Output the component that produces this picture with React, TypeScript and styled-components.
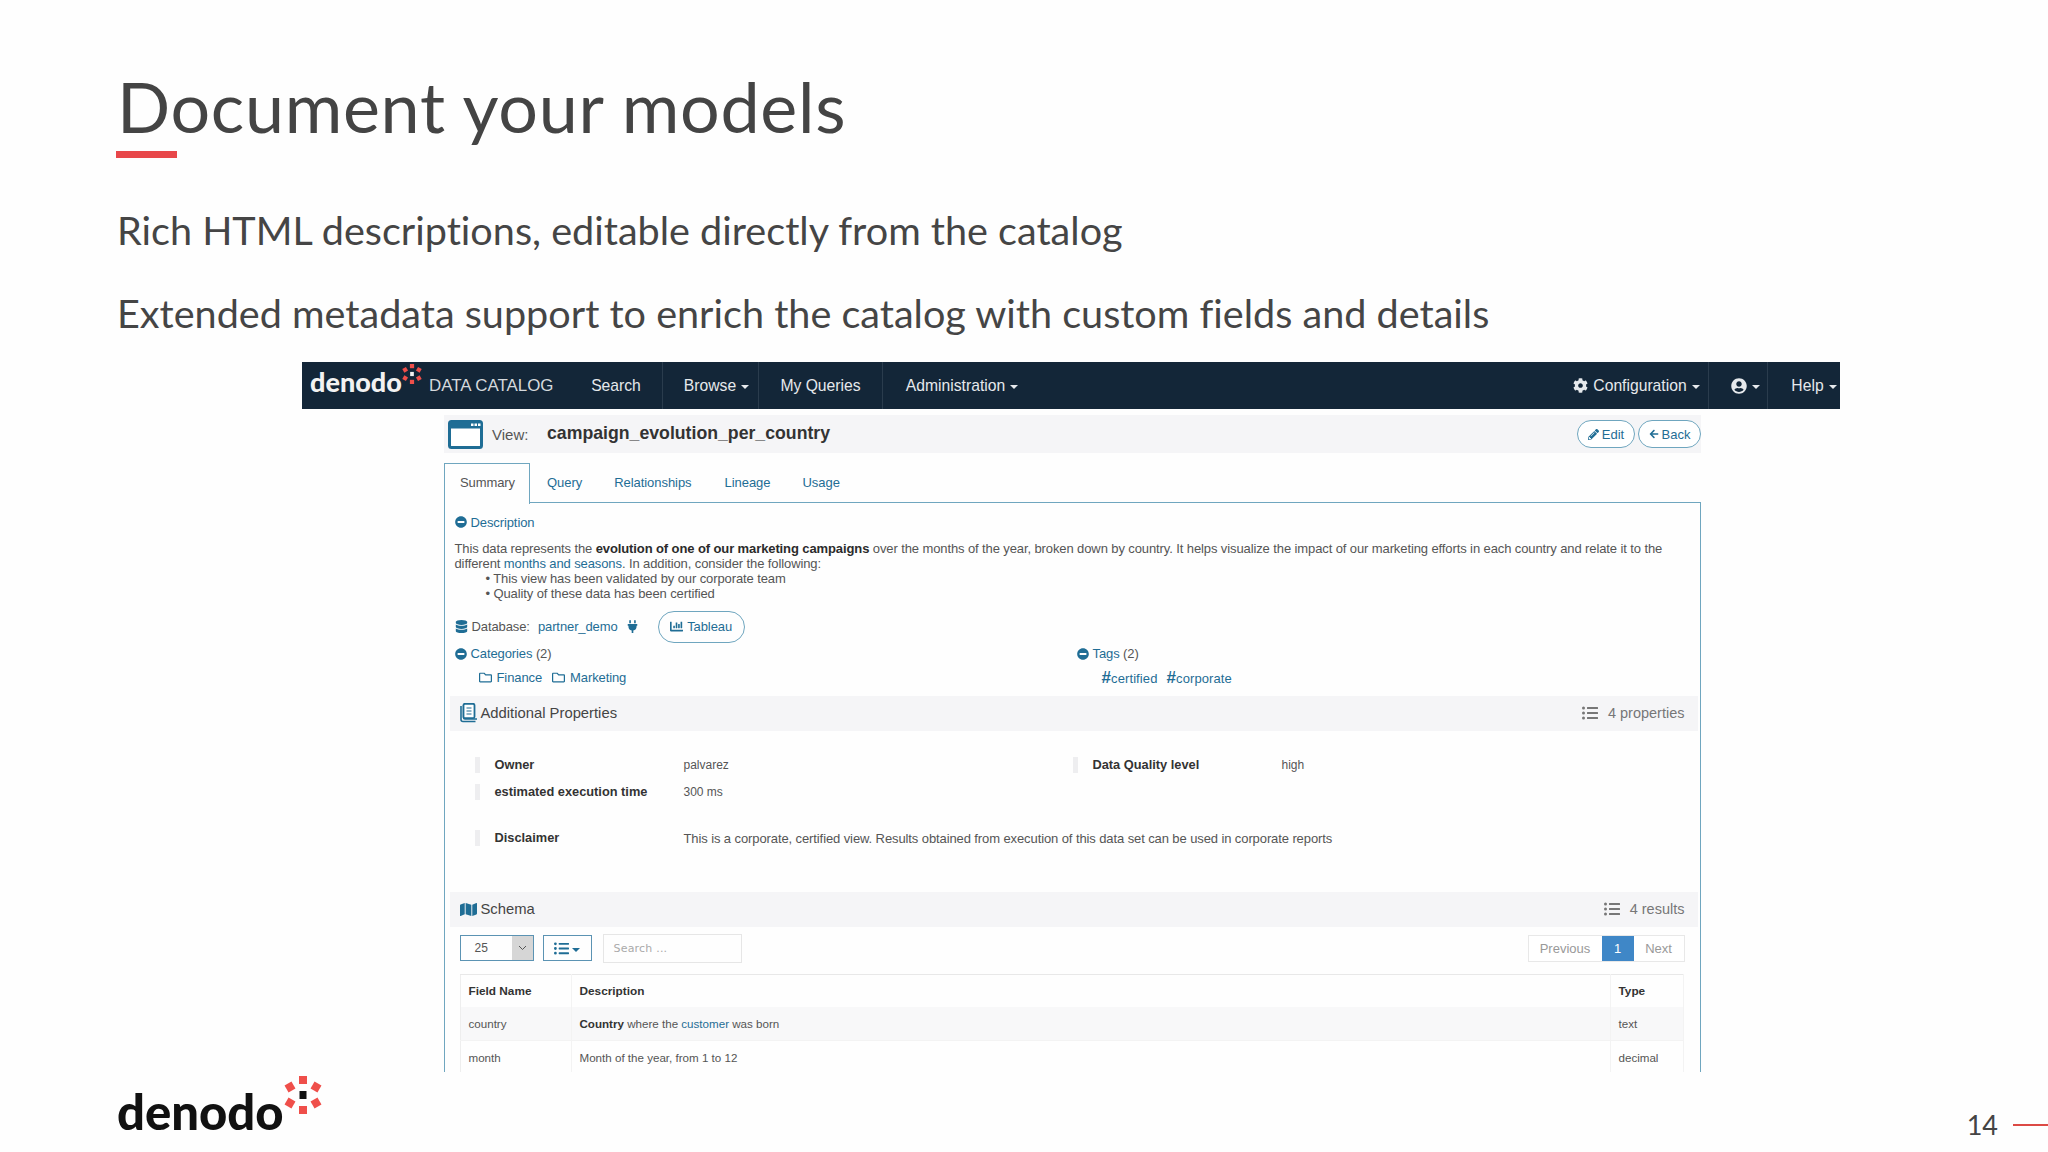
import styled, { createGlobalStyle } from "styled-components";
import {
  FaArrowLeft,
  FaChartBar,
  FaCog,
  FaDatabase,
  FaListUl,
  FaMap,
  FaMinusCircle,
  FaPencilAlt,
  FaPlug,
  FaRegFolder,
  FaUserCircle
} from "react-icons/fa";

const LINK = "#1f6d95";
const BORDER = "#6fa6bf";

const GlobalStyle = createGlobalStyle`
  * { box-sizing: border-box; }
  html, body { margin: 0; padding: 0; background: #fefefe; }
`;

const Slide = styled.div`
  width: 2048px;
  height: 1152px;
  overflow: hidden;
  display: flex;
  flex-direction: column;
  background: #fefefe;
  font-family: "Lato", "Liberation Sans", sans-serif;
  font-variant-ligatures: none;
  color: #444;
`;

const Title = styled.h1`
  margin: 63px 0 0 117px;
  font-size: 70px;
  line-height: 86px;
  font-weight: 400;
  letter-spacing: 0.7px;
  color: #444;
`;

const TitleRule = styled.div`
  width: 61px;
  height: 7px;
  margin: 2px 0 0 116px;
  background: #e8474a;
`;

const Lead = styled.p<{ $top: number }>`
  margin: ${(p) => p.$top}px 0 0 117px;
  font-size: 39.6px;
  line-height: 50px;
  color: #454545;
`;

const AppFrame = styled.div`
  width: 1538px;
  height: 710px;
  margin: 24px 0 0 302px;
  overflow: hidden;
  font-family: "Liberation Sans", Arial, sans-serif;
  font-size: 13px;
  color: #555;
`;

const NavBar = styled.nav`
  height: 47px;
  display: flex;
  align-items: stretch;
  background: #132638;
  color: #e6e9ec;
  font-size: 15.7px;
`;

const NavBrand = styled.div`
  width: 127px;
  display: flex;
  align-items: center;
  padding-left: 8px;
`;

const BrandWord = styled.span`
  margin-top: -7px;
  font-family: "Lato", sans-serif;
  font-size: 27px;
  font-weight: 900;
  color: #f2f2f2;
  line-height: 30px;
`;

const BrandMark = styled.span`
  display: inline-flex;
  margin-top: -24px;
`;

const NavTitle = styled.div`
  width: 141px;
  display: flex;
  align-items: center;
  font-size: 16.9px;
  color: #d5d9dd;
`;

const NavItem = styled.div<{ $width: number; $edge?: boolean; $pad?: number }>`
  width: ${(p) => p.$width}px;
  padding-left: ${(p) => p.$pad ?? 0}px;
  display: flex;
  align-items: center;
  justify-content: center;
  gap: 5px;
  border-right: ${(p) => (p.$edge ? "1px solid #2a3c4d" : "none")};
`;

const NavSpacer = styled.div`
  flex: 1;
`;

const Caret = styled.span`
  display: inline-block;
  width: 0;
  height: 0;
  margin-top: 3px;
  border-left: 4px solid transparent;
  border-right: 4px solid transparent;
  border-top: 4px solid currentColor;
`;

const Content = styled.div`
  margin-left: 142px;
  width: 1257px;
`;

const ViewBar = styled.div`
  height: 38px;
  margin-top: 6px;
  padding: 0 0 0 4px;
  display: flex;
  align-items: center;
  background: #f5f5f7;
`;

const ViewLabel = styled.span`
  margin-left: 9px;
  width: 55px;
  font-size: 15px;
  color: #555;
`;

const ViewName = styled.span`
  flex: 1;
  margin-top: -2px;
  font-size: 17.7px;
  font-weight: 700;
  color: #333;
`;

const PillButton = styled.span<{ $width: number }>`
  width: ${(p) => p.$width}px;
  height: 28px;
  margin-left: 3px;
  display: inline-flex;
  align-items: center;
  justify-content: center;
  gap: 3px;
  border: 1px solid ${BORDER};
  border-radius: 14px;
  background: #fff;
  color: ${LINK};
  font-size: 13px;
`;

const TabRow = styled.div`
  height: 39px;
  margin-top: 10px;
  display: flex;
  align-items: stretch;
`;

const ActiveTab = styled.div`
  width: 86px;
  height: 41px;
  padding: 0 0 4px 15px;
  display: flex;
  align-items: center;
  border: 1.5px solid ${BORDER};
  border-bottom: none;
  background: #fefefe;
  position: relative;
  z-index: 1;
  color: #555;
  letter-spacing: -0.1px;
`;

const Tab = styled.div<{ $gap: number }>`
  margin-left: ${(p) => p.$gap}px;
  display: flex;
  align-items: center;
  color: ${LINK};
  letter-spacing: -0.05px;
`;

const Panel = styled.div`
  height: 570px;
  padding: 0 2.5px 0 4.5px;
  border: 1.5px solid ${BORDER};
  border-bottom: none;
`;

const Line = styled.div<{ $top: number; $height?: number }>`
  height: ${(p) => p.$height ?? 20}px;
  margin: ${(p) => p.$top}px 0 0 5px;
  display: flex;
  align-items: center;
  letter-spacing: -0.1px;
`;

const Toggle = styled(FaMinusCircle)`
  width: 12px;
  height: 12px;
  margin-right: 4px;
  color: ${LINK};
`;

const LinkText = styled.span`
  color: ${LINK};
`;

const Paragraph = styled.div`
  margin: 8.5px 0 0 5px;
  line-height: 15px;
  color: #555;
  letter-spacing: -0.105px;

  b {
    color: #2b2b2b;
  }
`;

const Bullet = styled.div`
  padding-left: 31px;
`;

const RowIcon = styled.span<{ $gap: number }>`
  display: inline-flex;
  margin-right: ${(p) => p.$gap}px;
  color: ${LINK};
`;

const DatabaseName = styled.span`
  margin: 0 8px;
  color: ${LINK};
`;

const TableauButton = styled.span`
  width: 87px;
  height: 32px;
  margin-left: 19px;
  display: inline-flex;
  align-items: center;
  justify-content: center;
  gap: 4px;
  border: 1.5px solid ${BORDER};
  border-radius: 16px;
  color: ${LINK};
`;

const TwoCols = styled.div`
  display: grid;
  grid-template-columns: 622px 1fr;
`;

const FolderLink = styled.span`
  display: inline-flex;
  align-items: center;
  gap: 5px;
  margin-right: 10px;
  color: ${LINK};
  letter-spacing: -0.1px;
`;

const ChipRow = styled.div<{ $indent: number }>`
  height: 20px;
  margin-top: 4px;
  padding-left: ${(p) => p.$indent}px;
  display: flex;
  align-items: center;
`;

const Hash = styled.span`
  font-weight: 700;
  font-size: 17px;
`;

const TagLink = styled.span`
  margin-right: 9px;
  color: ${LINK};
  letter-spacing: 0.1px;
`;

const SectionHeader = styled.div<{ $top: number }>`
  height: 35px;
  margin-top: ${(p) => p.$top}px;
  padding: 0 13px 0 10px;
  display: flex;
  align-items: center;
  justify-content: space-between;
  background: #f5f5f7;
`;

const SectionName = styled.div`
  display: flex;
  align-items: center;
  gap: 3px;
  font-size: 14.8px;
  color: #444;
`;

const SchemaIcon = styled(FaMap)`
  width: 17px;
  height: 17px;
  margin-right: 1px;
  color: ${LINK};
`;

const SectionCount = styled.div`
  display: flex;
  align-items: center;
  gap: 10px;
  font-size: 14.5px;
  color: #777;
`;

const PropRow = styled.div<{ $top: number }>`
  margin-top: ${(p) => p.$top}px;
  padding-left: 25px;
  display: grid;
  grid-template-columns: 598px 1fr;
`;

const Prop = styled.div<{ $wide?: boolean }>`
  height: 20px;
  display: flex;
  align-items: center;
  grid-column: ${(p) => (p.$wide ? "1 / -1" : "auto")};
`;

const PropBar = styled.span`
  width: 5px;
  height: 16px;
  background: #eeeef0;
`;

const PropLabel = styled.span`
  width: 204px;
  padding-left: 15px;
  font-weight: 700;
  font-size: 12.8px;
  color: #333;
`;

const PropValue = styled.span<{ $large?: boolean }>`
  margin-top: 1px;
  font-size: ${(p) => (p.$large ? 13 : 12)}px;
  color: #555;
  letter-spacing: ${(p) => (p.$large ? "-0.1px" : "0")};
`;

const Toolbar = styled.div`
  height: 29px;
  margin: 7px 13px 0 10px;
  display: flex;
  align-items: center;
`;

const PageSize = styled.div`
  width: 74px;
  height: 26px;
  display: flex;
  align-items: stretch;
  border: 1px solid #5b93b3;
`;

const PageSizeValue = styled.span`
  flex: 1;
  padding-left: 14px;
  display: flex;
  align-items: center;
  font-size: 12px;
  color: #555;
`;

const PageSizeArrow = styled.span`
  width: 21px;
  display: flex;
  align-items: center;
  justify-content: center;
  background: #d6d6d6;
  color: #555;
`;

const ColumnsButton = styled.div`
  width: 49px;
  height: 26px;
  margin-left: 9px;
  display: flex;
  align-items: center;
  justify-content: center;
  gap: 3px;
  border: 1px solid #5b93b3;
  color: ${LINK};
`;

const SearchBox = styled.div`
  width: 139px;
  height: 29px;
  margin-left: 11px;
  padding-left: 10px;
  display: flex;
  align-items: center;
  border: 1.5px solid #e6e6e6;
  font-family: "DejaVu Sans", sans-serif;
  font-size: 11px;
  letter-spacing: 0.2px;
  color: #aaa;
`;

const Pager = styled.div`
  margin-left: auto;
  height: 27px;
  display: flex;
  align-items: stretch;
  border: 1px solid #e8e8e8;
`;

const PageCell = styled.span<{ $width: number; $active?: boolean }>`
  width: ${(p) => p.$width}px;
  display: flex;
  align-items: center;
  justify-content: center;
  font-size: 13px;
  background: ${(p) => (p.$active ? "#3f87c7" : "#fff")};
  color: ${(p) => (p.$active ? "#fff" : "#999")};
`;

const SchemaTable = styled.table`
  width: 1224px;
  margin: 11px 0 0 10px;
  border-collapse: collapse;
  table-layout: fixed;
  border-top: 1.5px solid #e8e8e8;
  border-left: 1px solid #eee;
  border-right: 1px solid #eee;
  font-size: 11.6px;
  color: #555;

  th {
    height: 33px;
    padding: 0 8px;
    text-align: left;
    font-size: 11.8px;
    color: #333;
    border-right: 1px solid #f3f3f3;
  }
  td {
    height: 33.5px;
    padding: 0 8px;
    border-right: 1px solid #f3f3f3;
    border-bottom: 1px solid #f3f3f3;
  }
  tbody tr:nth-child(odd) td {
    background: #f8f8f9;
  }
  b {
    color: #333;
  }
`;

const FieldCol = styled.col`
  width: 111px;
`;

const TypeCol = styled.col`
  width: 73px;
`;

const Footer = styled.div`
  flex: 1;
  display: flex;
  align-items: flex-start;
  justify-content: space-between;
`;

const FooterLogo = styled.div`
  margin: 4px 0 0 117px;
  display: flex;
  align-items: flex-start;
`;

const FooterWord = styled.span`
  font-family: "Lato", sans-serif;
  font-size: 49px;
  font-weight: 900;
  line-height: 52px;
  margin-top: 9px;
  color: #111;
`;

const PageMark = styled.div`
  margin-top: 36px;
  display: flex;
  align-items: center;
  gap: 15px;
  font-size: 27px;
  color: #444;
`;

const PageRule = styled.span`
  width: 35px;
  height: 2px;
  background: #dc4a45;
`;

function BrandDots({ size, centre }: { size: number; centre: string }) {
  return (
    <svg width={size} height={size} viewBox="0 0 38 38" aria-hidden="true">
      <rect x="15" y="0" width="8" height="8" fill="#ef4f4a" />
      <rect x="15" y="30" width="8" height="8" fill="#ef4f4a" />
      <rect x="15.5" y="15" width="7" height="8" fill={centre} />
      <rect x="2" y="7" width="8" height="8" fill="#ef4f4a" transform="rotate(-30 6 11)" />
      <rect x="28" y="7" width="8" height="8" fill="#ef4f4a" transform="rotate(30 32 11)" />
      <rect x="2" y="23" width="8" height="8" fill="#ef4f4a" transform="rotate(30 6 27)" />
      <rect x="28" y="23" width="8" height="8" fill="#ef4f4a" transform="rotate(-30 32 27)" />
    </svg>
  );
}

function ViewIcon() {
  return (
    <svg width="35" height="29" viewBox="0 0 35 29" aria-hidden="true">
      <rect x="1.5" y="1.5" width="32" height="26" rx="2" fill="#fff" stroke="#1f6d95" strokeWidth="3" />
      <rect x="1.5" y="1.5" width="32" height="7" fill="#1f6d95" />
      <rect x="23" y="3.5" width="2.5" height="2.5" fill="#fff" />
      <rect x="26.5" y="3.5" width="2.5" height="2.5" fill="#fff" />
      <rect x="30" y="3.5" width="2.5" height="2.5" fill="#fff" />
    </svg>
  );
}

function PropertiesIcon() {
  return (
    <svg width="18" height="20" viewBox="0 0 18 20" aria-hidden="true">
      <path d="M1 3v13.5a2 2 0 0 0 2 2h12.5" fill="none" stroke="#1f6d95" strokeWidth="1.6" />
      <path d="M3.5 2v12.5a1.5 1.5 0 0 0 1.5 1.5h12" fill="none" stroke="#1f6d95" strokeWidth="1.4" />
      <rect x="3.5" y="0.8" width="11" height="14.4" rx="1.5" fill="#fff" stroke="#1f6d95" strokeWidth="1.8" />
      <path d="M6.5 5h5M6.5 8h5M6.5 11h5" stroke="#6b9db8" strokeWidth="1.3" />
    </svg>
  );
}

function ChevronDown() {
  return (
    <svg width="9" height="6" viewBox="0 0 9 6" aria-hidden="true">
      <path d="M1 1l3.5 3.5L8 1" fill="none" stroke="#555" strokeWidth="1" />
    </svg>
  );
}

export default function App() {
  return (
    <Slide>
      <GlobalStyle />
      <Title>Document your models</Title>
      <TitleRule />
      <Lead $top={47}>Rich HTML descriptions, editable directly from the catalog</Lead>
      <Lead $top={33}>Extended metadata support to enrich the catalog with custom fields and details</Lead>

      <AppFrame>
        <NavBar>
          <NavBrand>
            <BrandWord>denodo</BrandWord>
            <BrandMark>
              <BrandDots size={20} centre="#f2f2f2" />
            </BrandMark>
          </NavBrand>
          <NavTitle>DATA CATALOG</NavTitle>
          <NavItem $width={93} $edge>Search</NavItem>
          <NavItem $width={96} $edge $pad={12}>
            Browse <Caret />
          </NavItem>
          <NavItem $width={124} $edge>My Queries</NavItem>
          <NavItem $width={158}>
            Administration <Caret />
          </NavItem>
          <NavSpacer />
          <NavItem $width={146} $edge $pad={2}>
            <FaCog size={15} /> Configuration <Caret />
          </NavItem>
          <NavItem $width={59} $edge $pad={14}>
            <FaUserCircle size={16} /> <Caret />
          </NavItem>
          <NavItem $width={72} $pad={20}>
            Help <Caret />
          </NavItem>
        </NavBar>

        <Content>
          <ViewBar>
            <ViewIcon />
            <ViewLabel>View:</ViewLabel>
            <ViewName>campaign_evolution_per_country</ViewName>
            <PillButton $width={58}>
              <FaPencilAlt size={11} /> Edit
            </PillButton>
            <PillButton $width={63}>
              <FaArrowLeft size={10} /> Back
            </PillButton>
          </ViewBar>

          <TabRow>
            <ActiveTab>Summary</ActiveTab>
            <Tab $gap={17}>Query</Tab>
            <Tab $gap={32}>Relationships</Tab>
            <Tab $gap={33}>Lineage</Tab>
            <Tab $gap={32}>Usage</Tab>
          </TabRow>

          <Panel>
            <Line $top={9}>
              <Toggle />
              <LinkText>Description</LinkText>
            </Line>
            <Paragraph>
              This data represents the <b>evolution of one of our marketing campaigns</b> over the months of the year, broken down by country. It helps visualize the impact of our marketing efforts in each country and relate it to the
              <br />
              different <LinkText>months and seasons</LinkText>. In addition, consider the following:
              <Bullet>• This view has been validated by our corporate team</Bullet>
              <Bullet>• Quality of these data has been certified</Bullet>
            </Paragraph>

            <Line $top={10} $height={32}>
              <RowIcon $gap={4}>
                <FaDatabase size={13} />
              </RowIcon>
              Database:
              <DatabaseName>partner_demo</DatabaseName>
              <RowIcon $gap={0}>
                <FaPlug size={13} />
              </RowIcon>
              <TableauButton>
                <FaChartBar size={13} /> Tableau
              </TableauButton>
            </Line>

            <TwoCols>
              <div>
                <Line $top={1}>
                  <Toggle />
                  <LinkText>Categories</LinkText>&nbsp;(2)
                </Line>
                <ChipRow $indent={29}>
                  <FolderLink>
                    <FaRegFolder size={13} /> Finance
                  </FolderLink>
                  <FolderLink>
                    <FaRegFolder size={13} /> Marketing
                  </FolderLink>
                </ChipRow>
              </div>
              <div>
                <Line $top={1}>
                  <Toggle />
                  <LinkText>Tags</LinkText>&nbsp;(2)
                </Line>
                <ChipRow $indent={30}>
                  <TagLink>
                    <Hash>#</Hash>certified
                  </TagLink>
                  <TagLink>
                    <Hash>#</Hash>corporate
                  </TagLink>
                </ChipRow>
              </div>
            </TwoCols>

            <SectionHeader $top={8}>
              <SectionName>
                <PropertiesIcon /> Additional Properties
              </SectionName>
              <SectionCount>
                <FaListUl size={16} /> 4 properties
              </SectionCount>
            </SectionHeader>

            <PropRow $top={24}>
              <Prop>
                <PropBar />
                <PropLabel>Owner</PropLabel>
                <PropValue>palvarez</PropValue>
              </Prop>
              <Prop>
                <PropBar />
                <PropLabel>Data Quality level</PropLabel>
                <PropValue>high</PropValue>
              </Prop>
            </PropRow>
            <PropRow $top={7}>
              <Prop>
                <PropBar />
                <PropLabel>estimated execution time</PropLabel>
                <PropValue>300 ms</PropValue>
              </Prop>
            </PropRow>
            <PropRow $top={26}>
              <Prop $wide>
                <PropBar />
                <PropLabel>Disclaimer</PropLabel>
                <PropValue $large>
                  This is a corporate, certified view. Results obtained from execution of this data set can be used in corporate reports
                </PropValue>
              </Prop>
            </PropRow>

            <SectionHeader $top={44}>
              <SectionName>
                <SchemaIcon /> Schema
              </SectionName>
              <SectionCount>
                <FaListUl size={16} /> 4 results
              </SectionCount>
            </SectionHeader>

            <Toolbar>
              <PageSize>
                <PageSizeValue>25</PageSizeValue>
                <PageSizeArrow>
                  <ChevronDown />
                </PageSizeArrow>
              </PageSize>
              <ColumnsButton>
                <FaListUl size={15} /> <Caret />
              </ColumnsButton>
              <SearchBox>Search ...</SearchBox>
              <Pager>
                <PageCell $width={73}>Previous</PageCell>
                <PageCell $width={32} $active>1</PageCell>
                <PageCell $width={50}>Next</PageCell>
              </Pager>
            </Toolbar>

            <SchemaTable>
              <colgroup>
                <FieldCol />
                <col />
                <TypeCol />
              </colgroup>
              <thead>
                <tr>
                  <th>Field Name</th>
                  <th>Description</th>
                  <th>Type</th>
                </tr>
              </thead>
              <tbody>
                <tr>
                  <td>country</td>
                  <td>
                    <b>Country</b> where the <LinkText>customer</LinkText> was born
                  </td>
                  <td>text</td>
                </tr>
                <tr>
                  <td>month</td>
                  <td>Month of the year, from 1 to 12</td>
                  <td>decimal</td>
                </tr>
              </tbody>
            </SchemaTable>
          </Panel>
        </Content>
      </AppFrame>

      <Footer>
        <FooterLogo>
          <FooterWord>denodo</FooterWord>
          <BrandDots size={38} centre="#111" />
        </FooterLogo>
        <PageMark>
          14 <PageRule />
        </PageMark>
      </Footer>
    </Slide>
  );
}
